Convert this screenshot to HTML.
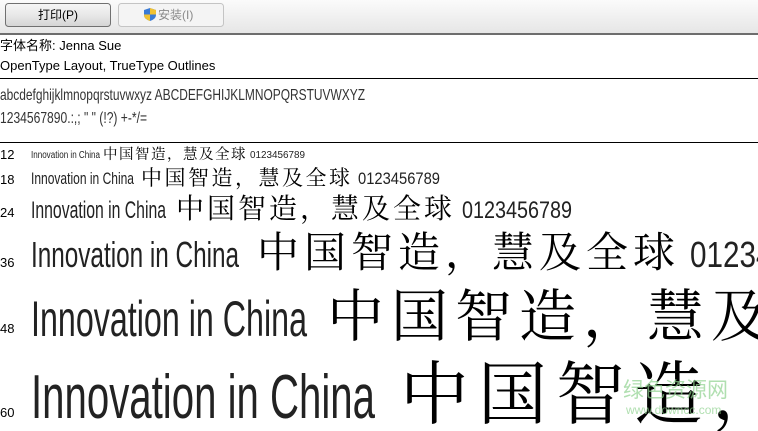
<!DOCTYPE html>
<html><head><meta charset="utf-8"><style>
html,body{margin:0;padding:0;background:#fff;width:758px;height:431px;overflow:hidden}
</style></head><body>
<svg width="758" height="431" xmlns="http://www.w3.org/2000/svg" font-family="Liberation Sans, Noto Sans CJK SC, sans-serif">
<defs>
<linearGradient id="tb" x1="0" y1="0" x2="0" y2="1"><stop offset="0" stop-color="#fbfbfb"/><stop offset="1" stop-color="#e6e6e6"/></linearGradient>
<linearGradient id="bt" x1="0" y1="0" x2="0" y2="1"><stop offset="0" stop-color="#f6f6f6"/><stop offset="0.5" stop-color="#e8e8e8"/><stop offset="1" stop-color="#d4d4d4"/></linearGradient>
</defs>
<rect x="0" y="0" width="758" height="33" fill="url(#tb)"/>
<rect x="0" y="33" width="758" height="2" fill="#6d6d6d"/>
<rect x="5.5" y="3.5" width="105" height="23" rx="3" fill="url(#bt)" stroke="#707070"/>
<text x="58" y="19" font-size="12" text-anchor="middle" fill="#000">打印(P)</text>
<rect x="118.5" y="3.5" width="105" height="23" rx="3" fill="#f4f4f4" stroke="#c4c4c4"/>
<path d="M150 8 L156 10 L156 15 Q156 19 150 21 Q144 19 144 15 L144 10 Z" fill="#3a7bd5"/>
<path d="M150 8 L156 10 L156 14.5 L150 14.5 Z M144 14.5 L150 14.5 L150 21 Q144 19 144 15 Z" fill="#f1c232"/>
<text x="158" y="19" font-size="12" fill="#8a8a8a">安装(I)</text>
<text x="0" y="50" font-size="13" fill="#000">字体名称: Jenna Sue</text>
<text x="0" y="70" font-size="13" fill="#000">OpenType Layout, TrueType Outlines</text>
<rect x="0" y="78" width="758" height="1" fill="#000"/>
<g font-family="Liberation Sans Narrow, sans-serif" fill="#333">
<text x="0" y="100" font-size="16" textLength="365" lengthAdjust="spacingAndGlyphs">abcdefghijklmnopqrstuvwxyz ABCDEFGHIJKLMNOPQRSTUVWXYZ</text>
<text x="0" y="123" font-size="16" textLength="147" lengthAdjust="spacingAndGlyphs">1234567890.:,; " " (!?) +-*/=</text>
</g>
<rect x="0" y="142" width="758" height="1" fill="#000"/>
<g font-size="13" fill="#000">
<text x="0" y="159">12</text><text x="0" y="184">18</text><text x="0" y="217">24</text>
<text x="0" y="267">36</text><text x="0" y="333">48</text><text x="0" y="417">60</text>
</g>
<g font-family="Liberation Sans Narrow, sans-serif" fill="#222">
<text x="31" y="158" font-size="10" textLength="69" lengthAdjust="spacingAndGlyphs">Innovation in China</text>
<text x="31" y="184" font-size="17" textLength="103" lengthAdjust="spacingAndGlyphs">Innovation in China</text>
<text x="31" y="218" font-size="24" textLength="135" lengthAdjust="spacingAndGlyphs">Innovation in China</text>
<text x="31" y="267" font-size="36" textLength="208" lengthAdjust="spacingAndGlyphs">Innovation in China</text>
<text x="31" y="336" font-size="50" textLength="276" lengthAdjust="spacingAndGlyphs">Innovation in China</text>
<text x="31" y="418" font-size="62" textLength="344" lengthAdjust="spacingAndGlyphs">Innovation in China</text>
<text x="250" y="158" font-size="10" textLength="55" lengthAdjust="spacingAndGlyphs">0123456789</text>
<text x="358" y="184" font-size="17" textLength="82" lengthAdjust="spacingAndGlyphs">0123456789</text>
<text x="462" y="218" font-size="24" textLength="110" lengthAdjust="spacingAndGlyphs">0123456789</text>
<text x="690" y="267" font-size="36" textLength="165" lengthAdjust="spacingAndGlyphs">0123456789</text>
</g>
<g font-family="Noto Serif CJK SC, serif" fill="#000">
<text x="103" y="159" font-size="14.5" letter-spacing="1.5">中国智造，慧及全球</text>
<text x="141" y="185" font-size="21" letter-spacing="2.5">中国智造，慧及全球</text>
<text x="176" y="218" font-size="28" letter-spacing="3">中国智造，慧及全球</text>
<text x="257" y="267" font-size="42" letter-spacing="5">中国智造，慧及全球</text>
<text x="327" y="336" font-size="57" letter-spacing="7">中国智造，慧及全球</text>
<text x="400" y="418" font-size="69" letter-spacing="9">中国智造，慧及全球</text>
</g>
<text x="623" y="397" font-size="21" fill="#8fd18f" fill-opacity="0.7">绿色资源网</text>
<text x="626" y="414" font-size="12" fill="#8fd18f" fill-opacity="0.7">www.downcc.com</text>
</svg>
</body></html>
